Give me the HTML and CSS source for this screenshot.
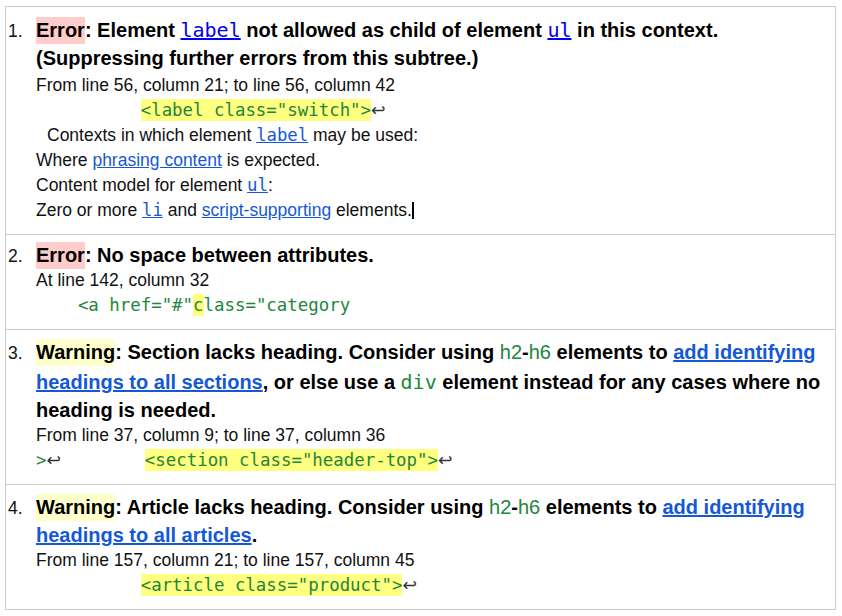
FILE: index.html
```html
<!DOCTYPE html>
<html lang="en">
<head>
<meta charset="utf-8">
<title>Validation results</title>
<link rel="stylesheet" href="styles.css">
</head>
<body>
<ol class="results">
  <li class="item">
    <div class="body">
      <p class="msg"><strong class="tag err">Error</strong>: Element <a class="hlink" href="#"><code class="hcode">label</code></a> not allowed as child of element <a class="hlink" href="#"><code class="hcode">ul</code></a> in this context. (Suppressing further errors from this subtree.)</p>
      <div class="details details-spaced">
        <p class="loc">From line 56, column 21; to line 56, column 42</p>
        <p class="extract">          <mark class="hl">&lt;label class="switch"&gt;</mark><span class="lf">↩</span></p>
        <p class="ctx-title">Contexts in which element <a class="blink" href="#"><code class="bcode">label</code></a> may be used:</p>
        <p class="ctx">Where <a class="blink" href="#">phrasing content</a> is expected.</p>
        <p class="ctx">Content model for element <a class="blink" href="#"><code class="bcode">ul</code></a>:</p>
        <p class="ctx">Zero or more <a class="blink" href="#"><code class="bcode">li</code></a> and <a class="blink" href="#">script-supporting</a> elements.<span class="caret"></span></p>
      </div>
    </div>
  </li>
  <li class="item">
    <div class="body">
      <p class="msg"><strong class="tag err">Error</strong>: No space between attributes.</p>
      <div class="details">
        <p class="loc">At line 142, column 32</p>
        <p class="extract">    &lt;a href="#"<mark class="hl">c</mark>lass="category</p>
      </div>
    </div>
  </li>
  <li class="item">
    <div class="body">
      <p class="msg"><strong class="tag warn">Warning</strong>: Section lacks heading. Consider using <code class="hsans">h2</code>-<code class="hsans">h6</code> elements to <a class="blink" href="#">add identifying headings to all sections</a>, or else use a <code class="hcode green">div</code> element instead for any cases where no heading is needed.</p>
      <div class="details">
        <p class="loc">From line 37, column 9; to line 37, column 36</p>
        <p class="extract">&gt;<span class="lf">↩</span>        <mark class="hl">&lt;section class="header-top"&gt;</mark><span class="lf">↩</span></p>
      </div>
    </div>
  </li>
  <li class="item">
    <div class="body">
      <p class="msg"><strong class="tag warn">Warning</strong>: Article lacks heading. Consider using <code class="hsans">h2</code>-<code class="hsans">h6</code> elements to <a class="blink" href="#">add identifying headings to all articles</a>.</p>
      <div class="details">
        <p class="loc">From line 157, column 21; to line 157, column 45</p>
        <p class="extract">          <mark class="hl">&lt;article class="product"&gt;</mark><span class="lf">↩</span></p>
      </div>
    </div>
  </li>
</ol>
</body>
</html>
```

FILE: styles.css
```css
html, body {
  margin: 0;
  padding: 0;
  background: #ffffff;
}

body {
  font-family: "Liberation Sans", Arial, sans-serif;
  color: #000000;
}

p {
  margin: 0;
}

.results {
  list-style: none;
  margin: 6px 6px 6px 5px;
  padding: 0;
  border: 1px solid #cccccc;
  counter-reset: item;
}

.item {
  display: flex;
  align-items: baseline;
  padding: 7px 8px 11px 2px;
  border-top: 1px solid #cccccc;
  counter-increment: item;
}

.item:first-child {
  border-top: 0;
  padding-top: 8px;
}

.item::before {
  content: counter(item) ".";
  flex: 0 0 28px;
  font-size: 17.5px;
  color: #111111;
}

.body {
  flex: 1 1 auto;
  min-width: 0;
}

.msg {
  font-size: 20px;
  font-weight: bold;
  line-height: 26px;
}

.tag {
  padding: 2px 0 3px;
}

.err {
  background: #ffcccc;
}

.warn {
  background: #ffffcc;
}

.hcode {
  font-family: "DejaVu Sans Mono", monospace;
  font-weight: normal;
  font-size: 20px;
  line-height: 30px;
}

.hsans {
  font-family: "Liberation Sans", Arial, sans-serif;
  font-weight: normal;
  font-size: 20px;
  line-height: 30px;
  color: #22863a;
}

.green {
  color: #22863a;
}

.hlink {
  color: #0000ee;
  text-decoration: underline;
}

.blink {
  color: #1558d6;
  text-decoration: underline;
}

.details {
  font-size: 17.5px;
  line-height: 25px;
  color: #111111;
}

.details-spaced {
  margin-top: 2px;
}

.extract {
  font-family: "DejaVu Sans Mono", monospace;
  font-size: 17.4px;
  white-space: pre;
  color: #22863a;
}

.hl {
  background: #ffff80;
  color: #22863a;
  padding: 1px 0;
}

.lf {
  font-family: "DejaVu Sans", sans-serif;
  color: #333333;
}

.ctx-title {
  padding-left: 11px;
}

.bcode {
  font-family: "DejaVu Sans Mono", monospace;
  font-size: 17.3px;
}

.caret {
  display: inline-block;
  width: 2px;
  height: 17px;
  background: #000000;
  vertical-align: -3px;
}
```
